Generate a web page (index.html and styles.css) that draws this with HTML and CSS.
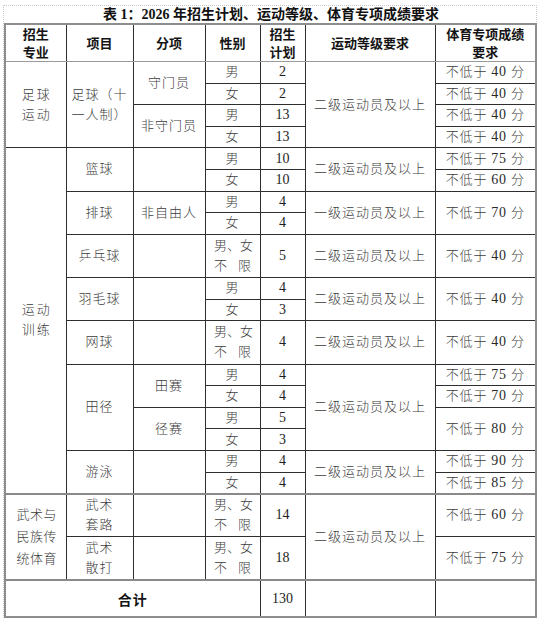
FILE: index.html
```html
<!DOCTYPE html>
<html lang="zh-CN">
<head>
<meta charset="utf-8">
<title>表1</title>
<link rel="stylesheet" href="styles.css">
</head>
<body>
<div class="sheet">
  <div class="title">表 1：2026 年招生计划、运动等级、体育专项成绩要求</div>
  <table class="plan">
    <colgroup>
      <col class="c1"><col class="c2"><col class="c3"><col class="c4"><col class="c5"><col class="c6"><col class="c7">
    </colgroup>
    <thead>
      <tr class="head">
        <th>招生<br>专业</th><th>项目</th><th>分项</th><th>性别</th><th>招生<br>计划</th><th>运动等级要求</th><th>体育专项成绩<br>要求</th>
      </tr>
    </thead>
    <tbody>
      <tr class="u">
        <td rowspan="4" class="major">足球<br>运动</td>
        <td rowspan="4">足球（十<br>一人制）</td>
        <td rowspan="2">守门员</td>
        <td>男</td><td class="num">2</td>
        <td rowspan="4">二级运动员及以上</td>
        <td class="score">不低于 <span class="d">40</span> 分</td>
      </tr>
      <tr class="u"><td>女</td><td class="num">2</td><td class="score">不低于 <span class="d">40</span> 分</td></tr>
      <tr class="u"><td rowspan="2">非守门员</td><td>男</td><td class="num">13</td><td class="score">不低于 <span class="d">40</span> 分</td></tr>
      <tr class="u"><td>女</td><td class="num">13</td><td class="score">不低于 <span class="d">40</span> 分</td></tr>

      <tr class="u">
        <td rowspan="14" class="major">运动<br>训练</td>
        <td rowspan="2">篮球</td><td rowspan="2"></td>
        <td>男</td><td class="num">10</td>
        <td rowspan="2">二级运动员及以上</td>
        <td class="score">不低于 <span class="d">75</span> 分</td>
      </tr>
      <tr class="u"><td>女</td><td class="num">10</td><td class="score">不低于 <span class="d">60</span> 分</td></tr>

      <tr class="u">
        <td rowspan="2">排球</td><td rowspan="2">非自由人</td>
        <td>男</td><td class="num">4</td>
        <td rowspan="2">一级运动员及以上</td>
        <td rowspan="2" class="score">不低于 <span class="d">70</span> 分</td>
      </tr>
      <tr class="u"><td>女</td><td class="num">4</td></tr>

      <tr class="t">
        <td>乒乓球</td><td></td>
        <td><span class="any"><span>男、女</span><span>不限</span></span></td>
        <td class="num">5</td>
        <td>二级运动员及以上</td>
        <td class="score">不低于 <span class="d">40</span> 分</td>
      </tr>

      <tr class="u">
        <td rowspan="2">羽毛球</td><td rowspan="2"></td>
        <td>男</td><td class="num">4</td>
        <td rowspan="2">二级运动员及以上</td>
        <td rowspan="2" class="score">不低于 <span class="d">40</span> 分</td>
      </tr>
      <tr class="u"><td>女</td><td class="num">3</td></tr>

      <tr class="t">
        <td>网球</td><td></td>
        <td><span class="any"><span>男、女</span><span>不限</span></span></td>
        <td class="num">4</td>
        <td>二级运动员及以上</td>
        <td class="score">不低于 <span class="d">40</span> 分</td>
      </tr>

      <tr class="u">
        <td rowspan="4">田径</td><td rowspan="2">田赛</td>
        <td>男</td><td class="num">4</td>
        <td rowspan="4">二级运动员及以上</td>
        <td class="score">不低于 <span class="d">75</span> 分</td>
      </tr>
      <tr class="u"><td>女</td><td class="num">4</td><td class="score">不低于 <span class="d">70</span> 分</td></tr>
      <tr class="u"><td rowspan="2">径赛</td><td>男</td><td class="num">5</td><td rowspan="2" class="score">不低于 <span class="d">80</span> 分</td></tr>
      <tr class="u"><td>女</td><td class="num">3</td></tr>

      <tr class="u">
        <td rowspan="2">游泳</td><td rowspan="2"></td>
        <td>男</td><td class="num">4</td>
        <td rowspan="2">二级运动员及以上</td>
        <td class="score">不低于 <span class="d">90</span> 分</td>
      </tr>
      <tr class="u"><td>女</td><td class="num">4</td><td class="score">不低于 <span class="d">85</span> 分</td></tr>

      <tr class="t sep">
        <td rowspan="2" class="major wide">武术与<br>民族传<br>统体育</td>
        <td>武术<br>套路</td><td></td>
        <td><span class="any"><span>男、女</span><span>不限</span></span></td>
        <td class="num">14</td>
        <td rowspan="2">二级运动员及以上</td>
        <td class="score">不低于 <span class="d">60</span> 分</td>
      </tr>
      <tr class="t">
        <td>武术<br>散打</td><td></td>
        <td><span class="any"><span>男、女</span><span>不限</span></span></td>
        <td class="num">18</td>
        <td class="score">不低于 <span class="d">75</span> 分</td>
      </tr>

      <tr class="total sep">
        <td colspan="4" class="sum">合计</td>
        <td class="num">130</td><td></td><td></td>
      </tr>
    </tbody>
  </table>
</div>
</body>
</html>
```

FILE: styles.css
```css
html, body {
  margin: 0;
  padding: 0;
  background: #ffffff;
}

.sheet {
  margin: 5px 0 0 3px;
  width: 532px;
  border-top: 1px dotted #c9c9c9;
  border-left: 1px dotted #c9c9c9;
  border-right: 1px dotted #c9c9c9;
}

.title {
  height: 17px;
  line-height: 17px;
  text-align: center;
  font-family: "Liberation Serif", "Noto Sans CJK SC", serif;
  font-weight: bold;
  font-size: 14px;
  color: #111;
  padding-left: 2px;
}

.plan {
  width: 531px;
  table-layout: fixed;
  border-collapse: collapse;
  border: 2px solid #8e8e8e;
  font-family: "Liberation Serif", "Noto Sans CJK SC", serif;
}

.c1 { width: 61px; }
.c2 { width: 67px; }
.c3 { width: 72px; }
.c4 { width: 55px; }
.c5 { width: 45px; }
.c6 { width: 130px; }
.c7 { width: 101px; }

.plan th,
.plan td {
  border: 1px solid #2e2e2e;
  padding: 0;
  text-align: center;
  vertical-align: middle;
  overflow: hidden;
  white-space: nowrap;
}

.plan th {
  font-family: "Noto Sans CJK SC", sans-serif;
  font-weight: bold;
  font-size: 13px;
  line-height: 18px;
  color: #141414;
  border-bottom-color: #9a9a9a;
}

.head { height: 36px; }
.u { height: 21.6px; }
.t { height: 43.3px; }
.total { height: 37px; }

.plan td {
  font-family: "Liberation Serif", "Noto Sans CJK SC", serif;
  font-weight: 300;
  font-size: 13px;
  line-height: 20px;
  letter-spacing: 1px;
  color: #3c3c3c;
}

.plan td.major {
  letter-spacing: 2px;
  line-height: 20px;
  padding-left: 2px;
}

.plan td.major.wide {
  letter-spacing: 0.5px;
  line-height: 22px;
}

.plan td.num {
  font-size: 14px;
  letter-spacing: 0;
  color: #1e1e1e;
  font-weight: normal;
}

.plan td.score {
  letter-spacing: 0.8px;
}

.d {
  font-size: 14px;
  font-weight: normal;
  color: #2a2a2a;
}

.any {
  display: inline-flex;
  flex-direction: column;
  width: 37px;
  vertical-align: middle;
}

.any span {
  display: block;
  text-align: justify;
  text-align-last: justify;
  letter-spacing: 0;
}

.sep td {
  border-top: 2px solid #8a8a8a;
}

.plan td.sum {
  font-family: "Noto Sans CJK SC", sans-serif;
  font-weight: bold;
  font-size: 14px;
  color: #141414;
  letter-spacing: 1px;
}
```
